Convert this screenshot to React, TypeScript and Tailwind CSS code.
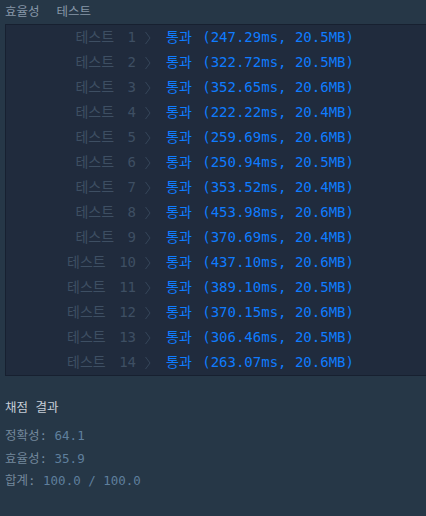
const ROWS: [string, string][] = [
  ["247.29ms", "20.5MB"],
  ["322.72ms", "20.5MB"],
  ["352.65ms", "20.6MB"],
  ["222.22ms", "20.4MB"],
  ["259.69ms", "20.6MB"],
  ["250.94ms", "20.5MB"],
  ["353.52ms", "20.4MB"],
  ["453.98ms", "20.6MB"],
  ["370.69ms", "20.4MB"],
  ["437.10ms", "20.6MB"],
  ["389.10ms", "20.5MB"],
  ["370.15ms", "20.6MB"],
  ["306.46ms", "20.5MB"],
  ["263.07ms", "20.6MB"],
];

const mono = "font-['DejaVu_Sans_Mono','Noto_Sans_CJK_KR',monospace]";

function Chevron() {
  return (
    <svg width="6" height="14" viewBox="0 0 6 14" className="shrink-0">
      <path d="M0.5 1 L5 7 L0.5 13" fill="none" stroke="#35465a" strokeWidth="1" />
    </svg>
  );
}

export default function App() {
  return (
    <div className={`w-[426px] h-[516px] overflow-hidden bg-[#263747] ${mono}`}>
      <div className="flex items-center gap-[17px] px-[5px] h-[24px] text-[12.5px] text-[#8696a7]">
        <span>효율성</span>
        <span>테스트</span>
      </div>

      <div className="ml-[5px] w-[430px] border border-[#172030] bg-[#202b3d]">
        {ROWS.map(([ms, mb], i) => (
          <div key={i} className="flex items-center h-[25px] text-[14px] whitespace-pre">
            <div className="w-[130px] text-right text-[#3e4f63] [word-spacing:5px]">테스트 {i + 1}</div>
            <div className="ml-[9px]">
              <Chevron />
            </div>
            <div className="ml-[15px] text-[#0f7cff]">
              <span>통과</span>
              <span className="ml-[2px]"> ({ms}, {mb})</span>
            </div>
          </div>
        ))}
      </div>

      <div className="px-[5px] pt-[23px] text-[12.5px]">
        <div className="text-[#c5cdd6] leading-[18px] mb-[8px]">채점 결과</div>
        <div className="flex flex-col text-[#74889c] leading-[22.5px]">
          <div>
            정확성: <span className="text-[#5f7f9d]">64.1</span>
          </div>
          <div>
            효율성: <span className="text-[#5f7f9d]">35.9</span>
          </div>
          <div>
            합계: <span className="text-[#5f7f9d]">100.0 / 100.0</span>
          </div>
        </div>
      </div>
    </div>
  );
}
